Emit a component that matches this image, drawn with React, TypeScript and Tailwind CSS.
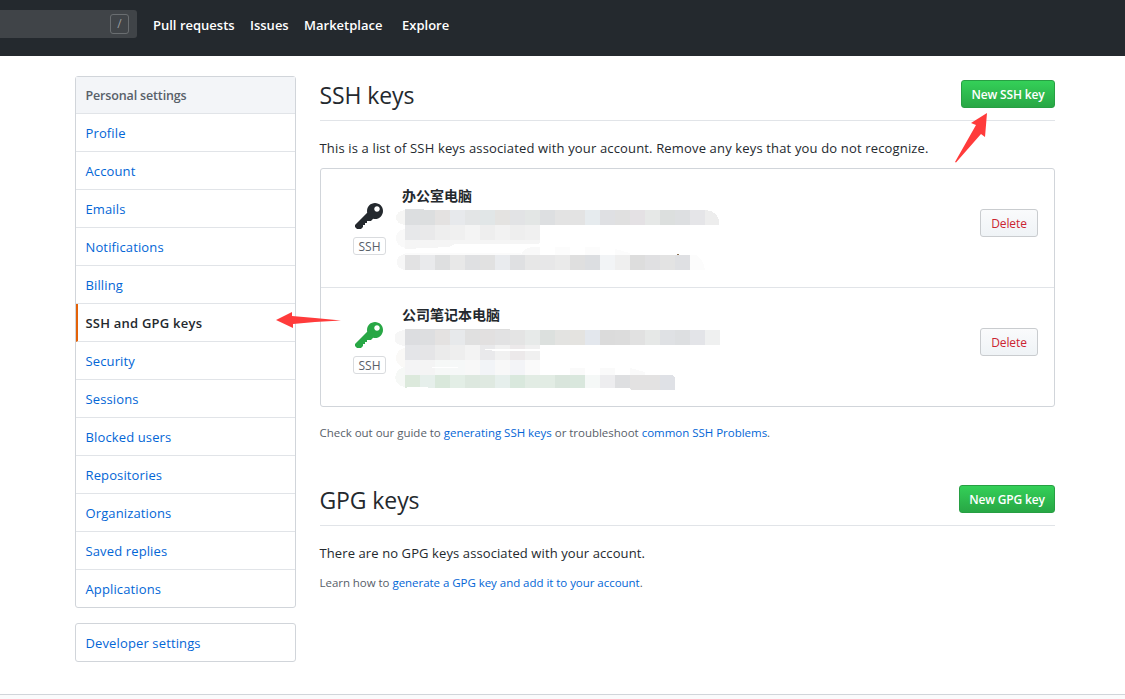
const menuItems = [
    "Profile",
    "Account",
    "Emails",
    "Notifications",
    "Billing",
    "SSH and GPG keys",
    "Security",
    "Sessions",
    "Blocked users",
    "Repositories",
    "Organizations",
    "Saved replies",
    "Applications",
]

const navItems = [
    { label: "Pull requests", className: "w-[97px]" },
    { label: "Issues", className: "w-[54px]" },
    { label: "Marketplace", className: "w-[98px]" },
    { label: "Explore", className: "w-[60px]" },
]

type MosaicRow = { y: number; h: number; colors: string[] }

// key details are pixelated, every cell is 15px wide
const officeRows: MosaicRow[] = [
    { y: 15, h: 15, colors: ["#dcdee0", "#dcdedf", "#e4e2e1", "#e7e9ec", "#e3e5e6", "#e1e6e7", "#e4e3e1", "#e2e3e5", "#e3e6e5", "#dddfe1", "#e3e3e3", "#e3e3e3", "#e6ebee", "#dfe0e3", "#e0e0e0", "#e4e1e4", "#e6e8e7", "#dcdfde", "#dddfe1", "#e5e5e8"] },
    { y: 30, h: 15, colors: ["#e7e8ea", "#e9e9ea", "#eeeeee", "#f0f0f0", "#f4f4f4", "#eeeeee", "#f2f2f2", "#eeeeee", "#f0f0f0"] },
    { y: 60, h: 15, colors: ["#e2e2e3", "#e9eaec", "#dedfe0", "#e8e8e8", "#dfe0e2", "#e1e1e1", "#e9ebee", "#dfe0e2", "#e7e7e7", "#e7e7e8", "#eaeaea", "#dfdfdf", "#dcdee1", "#f2f4f6", "#efefef", "#dddddd", "#e0e0e2", "#e3e3e3", "#dfe0e3"] },
]

const laptopRows: MosaicRow[] = [
    { y: 16, h: 15, colors: ["#dcdde0", "#dddee0", "#e4e2e1", "#e7e9eb", "#e0e0e0", "#e2e0e0", "#e2e2e3", "#e4e4e4", "#e7eae9", "#dce0de", "#e3e3e1", "#e4e3e0", "#e3e7ed", "#dbdbdb", "#dcdcdc", "#e1e1e1", "#e6e8e7", "#dfe1e4", "#dddfe1", "#e3e4e8", "#eff0f0"] },
    { y: 31, h: 15, colors: ["#e4e5e8", "#e5e5e7", "#ebebeb", "#eeeeee", "#f3f3f3", "#e9e9eb", "#f1f1f1", "#ece9ea", "#f0f0f0"] },
    { y: 46, h: 15, colors: ["#f4f4f5", "#f4f4f4", "#f6f8f7", "#f6f8f8", "#f8f8f8", "#f2f4f7", "#f8f8f8", "#f3f4f7", "#fafafa"] },
    { y: 61, h: 13, colors: ["#dce9dc", "#e6efeb", "#d9e8db", "#e3eee6", "#dde8df", "#dfe9e1", "#e6efec", "#d9e8dd", "#e2ece4", "#e2ece4", "#d9e5dc", "#d9e7dd", "#f5f8f7", "#ededef", "#dedfe1"] },
]

function Mosaic({ rows, children }: { rows: MosaicRow[]; children?: React.ReactNode }) {
    return (
        <svg width="330" height="78" viewBox="0 0 330 78" shapeRendering="crispEdges" className="block">
            {rows.map((row) =>
                row.colors.map((color, i) => (
                    <rect key={`${row.y}-${i}`} x={10 + i * 15} y={row.y} width="15" height={row.h} fill={color} />
                ))
            )}
            {children}
        </svg>
    )
}

function KeyIcon({ className }: { className: string }) {
    return (
        <svg width="28" height="32" viewBox="0 0 14 16" fill="currentColor" className={className}>
            <path
                fillRule="evenodd"
                d="M12.83 2.17C12.08 1.42 11.14 1.03 10 1c-1.13.03-2.08.42-2.83 1.17S6.04 3.86 6.01 5c0 .3.03.59.09.89L0 12v1l1 1h2l1-1v-1h1v-1h1v-1h2l1.09-1.11c.3.08.59.11.91.11 1.14-.03 2.08-.42 2.83-1.17S13.97 6.14 14 5c-.03-1.14-.42-2.08-1.17-2.83zM11 5.38c-.77 0-1.38-.61-1.38-1.38 0-.77.61-1.38 1.38-1.38.77 0 1.38.61 1.38 1.38 0 .77-.61 1.38-1.38 1.38z"
            />
        </svg>
    )
}

function KeyRow({ title, iconClass, children }: { title: string; iconClass: string; children: React.ReactNode }) {
    return (
        <li className="flex h-[119px] pl-8 pr-4 border-b border-[#e1e4e8] last:border-b-0">
            <div className="flex w-[33px] flex-col pt-8">
                <KeyIcon className={`ml-[2px] ${iconClass}`} />
                <span className="mt-1 h-[18px] w-[33px] rounded-[3px] border border-[#d9dbde] text-center text-[12px] leading-[17px] text-[#586069]">
                    SSH
                </span>
            </div>
            <div className="ml-[9px] w-[330px] pt-[18px]">
                <strong className="block h-[18px] pl-[7px] text-[14px] leading-[18px] font-bold">{title}</strong>
                <div className="-mt-[10px]">{children}</div>
            </div>
            <button className="mt-10 ml-auto h-7 w-[58px] rounded-[3px] border border-[#c9cccf] bg-linear-to-b from-[#fafbfc] to-[#eff3f6] pt-px text-[12px] leading-5 tracking-[-0.1px] text-[#cb2431]">
                Delete
            </button>
        </li>
    )
}

function SectionHeading({ title, action, className }: { title: string; action: string; className: string }) {
    return (
        <div className="flex h-[45px] items-start justify-between border-b border-[#e1e4e8]">
            <h2 className="-ml-[0.5px] pt-[3px] text-[23px] leading-8 font-normal tracking-[-0.1px]">{title}</h2>
            <button
                className={`mt-1 h-7 rounded-[3px] border border-[#279f43] bg-linear-to-b from-[#34d058] to-[#28a745] pt-px text-[12px] leading-5 font-semibold tracking-[-0.18px] text-white ${className}`}
            >
                {action}
            </button>
        </div>
    )
}

export default function App() {
    return (
        <div className="relative h-[699px] overflow-hidden bg-white font-['Open_Sans','Noto_Sans_CJK_SC',sans-serif] text-[13px] text-[#24292e]">
            <header className="flex h-14 bg-[#24292e] pt-[10px]">
                <div className="flex h-7 w-[137px] justify-end rounded-r-[3px] bg-[#404448] pt-1 pr-2">
                    <span className="h-5 w-[19px] rounded-[3px] border border-[#6a6e71] text-center text-[12px] leading-[18px] text-[#9a9da0]">
                        /
                    </span>
                </div>
                <nav className="flex pl-4 leading-[30px] font-semibold whitespace-nowrap text-white">
                    {navItems.map((item) => (
                        <a key={item.label} className={item.className}>
                            {item.label}
                        </a>
                    ))}
                </nav>
            </header>

            <div className="flex pt-5 pl-[75px]">
                <aside className="w-[221px]">
                    <nav className="rounded-[3px] border border-[#d1d5da]">
                        <h3 className="h-[37px] border-b border-[#e1e4e8] bg-[#f3f5f8] pl-[9.5px] text-[12.5px] leading-[38px] font-semibold tracking-[-0.15px] text-[#586069]">
                            Personal settings
                        </h3>
                        {menuItems.map((item) =>
                            item === "SSH and GPG keys" ? (
                                <a
                                    key={item}
                                    className="block h-[38px] border-b border-l-2 border-b-[#e1e4e8] border-l-[#e36209] pl-[7.5px] leading-[39px] font-semibold tracking-[0.22px]"
                                >
                                    {item}
                                </a>
                            ) : (
                                <a
                                    key={item}
                                    className="block h-[38px] border-b border-[#e1e4e8] pl-[9.5px] leading-[39px] tracking-[0.13px] text-[#0366d6] last:h-[37px] last:border-b-0"
                                >
                                    {item}
                                </a>
                            )
                        )}
                    </nav>
                    <nav className="mt-[15px] h-[39px] rounded-[3px] border border-[#d1d5da] pl-[9.5px] leading-[39px] tracking-[0.13px] text-[#0366d6]">
                        Developer settings
                    </nav>
                </aside>

                <main className="ml-6 w-[735px]">
                    <SectionHeading title="SSH keys" action="New SSH key" className="w-[94px]" />
                    <p className="mt-4 -ml-[0.5px] leading-[22px] tracking-[0.155px]">
                        This is a list of SSH keys associated with your account. Remove any keys that you do not recognize.
                    </p>
                    <ul className="mt-[9px] h-[239px] rounded-[3px] border border-[#d1d5da]">
                        <KeyRow title="办公室电脑" iconClass="text-[#24292e]">
                            <Mosaic rows={officeRows}>
                                <path d="M10 15C-2 16-2 29 10 30Z" fill="#f6f6f5" />
                                <path d="M10 14h19v1H10Z" fill="#dddfe0" />
                                <path d="M10 34C-2 35-2 51 10 53Z" fill="#f9f9f9" />
                                <path d="M10 45H145v3l-3 1H60l-6 3-44 2Z" fill="#f5f5f5" />
                                <path d="M126 60q2-7 12-8h7v8Z" fill="#f9f9f9" />
                                <path d="M160 52h15v8h-15ZM190 52h15v8h-15ZM220 54l15 4v2h-15Z" fill="#fcfcfc" />
                                <path d="M10 58h116v2H10Z" fill="#fbfbfb" />
                                <path d="M10 59C-1 60-1 74 10 75Z" fill="#f7f7f7" />
                                <path d="M310 15c9 0 13 6 14 10v5h-14Z" fill="#ededed" />
                                <path d="M295 60h6q8 5 9 15h-15Z" fill="#fcfcfc" />
                                <rect x="282" y="59" width="2" height="1" fill="#8b7355" />
                            </Mosaic>
                        </KeyRow>
                        <KeyRow title="公司笔记本电脑" iconClass="text-[#28a745]">
                            <Mosaic rows={laptopRows}>
                                <path d="M10 16C-5 17-5 31 10 32Z" fill="#f6f6f6" />
                                <path d="M10 15h105v1H10Z" fill="#dddddd" />
                                <path d="M10 34C-2 35-2 52 10 54Z" fill="#faf9f7" />
                                <path d="M10 53C-3 55-3 72 10 73Z" fill="#f6f8f6" />
                                <path d="M90 35h55v2h-41l-14-1Z" fill="#fff" />
                                <rect x="37" y="53" width="26" height="1" fill="#fff" />
                                <rect x="12" y="73" width="21" height="1" fill="#fff" />
                                <path d="M175 54h15v7h-15ZM205 54h15v7h-15ZM235 54l15 4v3h-15Z" fill="#fafafa" />
                                <path d="M235 61h30v15h-29v-1h-1Z" fill="#e3e2e2" />
                                <path d="M265 61h12l3 2v13h-15Z" fill="#dfe1e6" />
                            </Mosaic>
                        </KeyRow>
                    </ul>
                    <p className="mt-4 -ml-[0.5px] text-[11.5px] leading-[19px] tracking-[-0.02px] text-[#586069]">
                        Check out our guide to <a className="text-[#0366d6]">generating SSH keys</a> or troubleshoot{" "}
                        <a className="text-[#0366d6]">common SSH Problems</a>.
                    </p>
                    <div className="mt-[39px]">
                        <SectionHeading title="GPG keys" action="New GPG key" className="w-24" />
                    </div>
                    <p className="mt-4 -ml-[0.5px] leading-[22px] tracking-[0.1px]">
                        There are no GPG keys associated with your account.
                    </p>
                    <p className="mt-2 -ml-[0.5px] text-[11.5px] leading-[22px] tracking-[-0.04px] text-[#586069]">
                        Learn how to <a className="text-[#0366d6]">generate a GPG key and add it to your account</a>.
                    </p>
                </main>
            </div>

            <footer className="mt-8 h-[5px] border-t border-[#d1d5da] bg-[#fafbfc]" />

            {/* red pointer arrows */}
            <svg width="66" height="18" viewBox="0 0 66 18" className="absolute top-[312px] left-[276px]">
                <path d="M0 8 16 0v4l23 2 26 2.500-26 1.500-22 2v4Z" fill="#ff3b3b" />
            </svg>
            <svg width="34" height="52" viewBox="0 0 34 52" className="absolute top-[112px] left-[954px]">
                <path d="M33 1 17 11l5 2L1 50l1 .5L27 22l4 3Z" fill="#ff3b3b" />
            </svg>
        </div>
    )
}
